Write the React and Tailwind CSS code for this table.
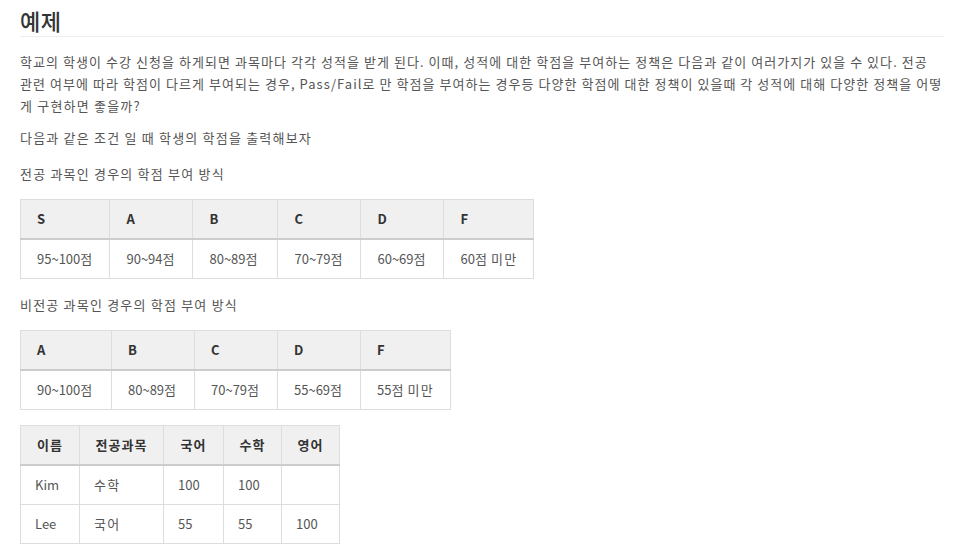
import React from "react";

const font = { fontFamily: '"Noto Sans CJK KR", "Noto Sans", sans-serif' };

function K({ text }) {
  const parts = text.split(/([\uAC00-\uD7A3]+)/);
  return (
    <>
      {parts.map((p, i) =>
        /[\uAC00-\uD7A3]/.test(p) ? (
          <span key={i} className="tracking-[1.2px]">
            {p}
          </span>
        ) : (
          <React.Fragment key={i}>{p}</React.Fragment>
        )
      )}
    </>
  );
}

function GradeTable({ heads, vals, widths }) {
  return (
    <table className="border-collapse text-[13px] leading-[20px] mt-[14px]">
      <thead>
        <tr className="bg-[#f0f0f0]">
          {heads.map((h, i) => (
            <th
              key={i}
              style={{ width: widths[i] }}
              className="border border-[#dddddd] border-b-2 border-b-[#cccccc] px-[16px] py-[9px] text-left font-bold text-[#333333]"
            >
              {h}
            </th>
          ))}
        </tr>
      </thead>
      <tbody>
        <tr>
          {vals.map((v, i) => (
            <td key={i} className="border border-[#dddddd] px-[16px] py-[9px] text-[#555555] whitespace-nowrap">
              <K text={v} />
            </td>
          ))}
        </tr>
      </tbody>
    </table>
  );
}

export default function App() {
  const rows = [
    ["Kim", "수학", "100", "100", ""],
    ["Lee", "국어", "55", "55", "100"],
  ];
  const w3 = [59, 84, 60, 58, 58];
  return (
    <div style={font} className="bg-white w-[960px] h-[554px] overflow-hidden pl-[20px] pr-[16px] pt-[6px] text-[#555555]">
      <h2 className="text-[22px] leading-[28px] font-medium text-[#333333] pb-[2px] border-b border-[#eeeeee] tracking-[0.5px]">예제</h2>
      <p className="text-[13px] leading-[22px] mt-[14px] whitespace-nowrap">
        <span className="block tracking-[1.05px]">
          학교의 학생이 수강 신청을 하게되면 과목마다 각각 성적을 받게 된다. 이때, 성적에 대한 학점을 부여하는 정책은 다음과 같이 여러가지가 있을 수 있다. 전공
        </span>
        <span className="block tracking-[1.05px]">
          관련 여부에 따라 학점이 다르게 부여되는 경우, Pass/Fail로 만 학점을 부여하는 경우등 다양한 학점에 대한 정책이 있을때 각 성적에 대해 다양한 정책을 어떻
        </span>
        <span className="block tracking-[1.2px]">게 구현하면 좋을까?</span>
      </p>
      <p className="text-[13px] leading-[22px] mt-[10px] tracking-[1.2px]">다음과 같은 조건 일 때 학생의 학점을 출력해보자</p>
      <p className="text-[13px] leading-[22px] mt-[14px] tracking-[1.2px]">전공 과목인 경우의 학점 부여 방식</p>
      <GradeTable
        heads={["S", "A", "B", "C", "D", "F"]}
        vals={["95~100점", "90~94점", "80~89점", "70~79점", "60~69점", "60점 미만"]}
        widths={[86, 83, 85, 83, 83, 87]}
      />
      <p className="text-[13px] leading-[22px] mt-[15px] tracking-[1.2px]">비전공 과목인 경우의 학점 부여 방식</p>
      <GradeTable
        heads={["A", "B", "C", "D", "F"]}
        vals={["90~100점", "80~89점", "70~79점", "55~69점", "55점 미만"]}
        widths={[91, 83, 83, 83, 89]}
      />
      <table className="border-collapse text-[13px] leading-[20px] mt-[15px]">
        <thead>
          <tr className="bg-[#f0f0f0]">
            {["이름", "전공과목", "국어", "수학", "영어"].map((h, i) => (
              <th
                key={i}
                style={{ width: w3[i] }}
                className="border border-[#dddddd] border-b-2 border-b-[#cccccc] px-[14px] py-[9px] text-center font-bold text-[#333333] whitespace-nowrap tracking-[1px]"
              >
                {h}
              </th>
            ))}
          </tr>
        </thead>
        <tbody>
          {rows.map((r, ri) => (
            <tr key={ri}>
              {r.map((v, i) => (
                <td key={i} className="border border-[#dddddd] px-[14px] py-[9px] text-left text-[#555555] whitespace-nowrap">
                  <K text={v} />
                </td>
              ))}
            </tr>
          ))}
        </tbody>
      </table>
    </div>
  );
}
